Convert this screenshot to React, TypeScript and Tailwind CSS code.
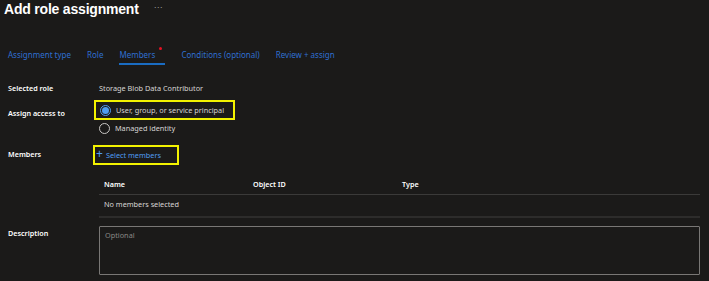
import React from "react";

const tabs = [
  { label: "Assignment type" },
  { label: "Role" },
  { label: "Members", active: true },
  { label: "Conditions (optional)" },
  { label: "Review + assign" },
];

export default function App() {
  return (
    <div
      className="w-[709px] h-[281px] overflow-hidden bg-[#1b1a19] text-[#d8d6d4] text-[7.3px] leading-[11px] whitespace-nowrap"
      style={{ fontFamily: '"Noto Sans", "Liberation Sans", Arial, sans-serif' }}
    >
      {/* header */}
      <div className="flex items-center pl-[4px] h-[18px]" style={{ fontFamily: '"Liberation Sans", Arial, sans-serif' }}>
        <h1 className="text-[14px] leading-[18px] font-bold text-white tracking-[-0.2px]">Add role assignment</h1>
        <span className="ml-[15px] text-[9px] text-[#a19f9d] -mt-[4px]">···</span>
      </div>

      {/* tabs */}
      <div className="flex pl-[8px] mt-[31px] gap-[16px] text-[8px] text-[#2f6fd0]">
        {tabs.map((t) => (
          <div key={t.label} className="relative flex flex-col">
            <span className="h-[12px] leading-[12px]">{t.label}</span>
            {t.active && (
              <>
                <span className="absolute left-[40px] top-[-2px] w-[3px] h-[3px] rounded-full bg-[#e81123]" />
                <span className="mt-[2px] h-[2px] w-[46px] bg-[#1a6cc2]" />
              </>
            )}
            {!t.active && <span className="mt-[2px] h-[2px]" />}
          </div>
        ))}
      </div>

      {/* form */}
      <div className="pl-[8px] pr-[9px] mt-[17px]">
        <div className="flex items-center h-[12px]">
          <span className="w-[91px] text-[7.2px] font-semibold text-white">Selected role</span>
          <span>Storage Blob Data Contributor</span>
        </div>

        <div className="flex mt-[6px]">
          <span className="w-[91px] text-[7.2px] font-semibold text-white mt-[8px]">Assign access to</span>
          <div className="flex flex-col">
            <div className="-ml-[5px] border-2 border-[#f2f200] w-[141px] h-[20px] flex items-center pl-[4px]">
              <span className="w-[11px] h-[11px] rounded-full border border-[#4f9cf0] flex items-center justify-center">
                <span className="w-[7px] h-[7px] rounded-full bg-[#4f9cf0]" />
              </span>
              <span className="ml-[5px]">User, group, or service principal</span>
            </div>
            <div className="flex items-center mt-[3px]">
              <span className="w-[11px] h-[11px] rounded-full border border-[#c8c6c4]" />
              <span className="ml-[5px]">Managed identity</span>
            </div>
          </div>
        </div>

        <div className="flex mt-[11px]">
          <span className="w-[91px] text-[7.2px] font-semibold text-white mt-[4px]">Members</span>
          <div className="-ml-[6px] border-2 border-[#f2f200] w-[86px] h-[20px] flex items-center pl-[1px] text-[#4f9cf0]">
            <span className="text-[12px] leading-[12px] -mt-[2px]">+</span>
            <span className="ml-[3px]">Select members</span>
          </div>
        </div>

        {/* table */}
        <div className="ml-[91px] mt-[14px]">
          <div className="grid grid-cols-[149px_149px_1fr] h-[11px] pl-[5px] text-[7.2px] font-semibold text-white">
            <span>Name</span>
            <span>Object ID</span>
            <span>Type</span>
          </div>
          <div className="mt-[4px] h-px bg-[#3b3a39]" />
          <div className="pl-[5px] h-[19px] flex items-center">No members selected</div>
          <div className="mt-[2px] h-[2px] bg-[#2d2c2b]" />
        </div>

        <div className="flex mt-[8px]">
          <span className="w-[91px] text-[7.2px] font-semibold text-white mt-[2px]">Description</span>
          <div className="flex-1 h-[49px] border border-[#797775] rounded-[1px] px-[5px] py-[3px] text-[#8a8886]">
            Optional
          </div>
        </div>
      </div>
    </div>
  );
}
